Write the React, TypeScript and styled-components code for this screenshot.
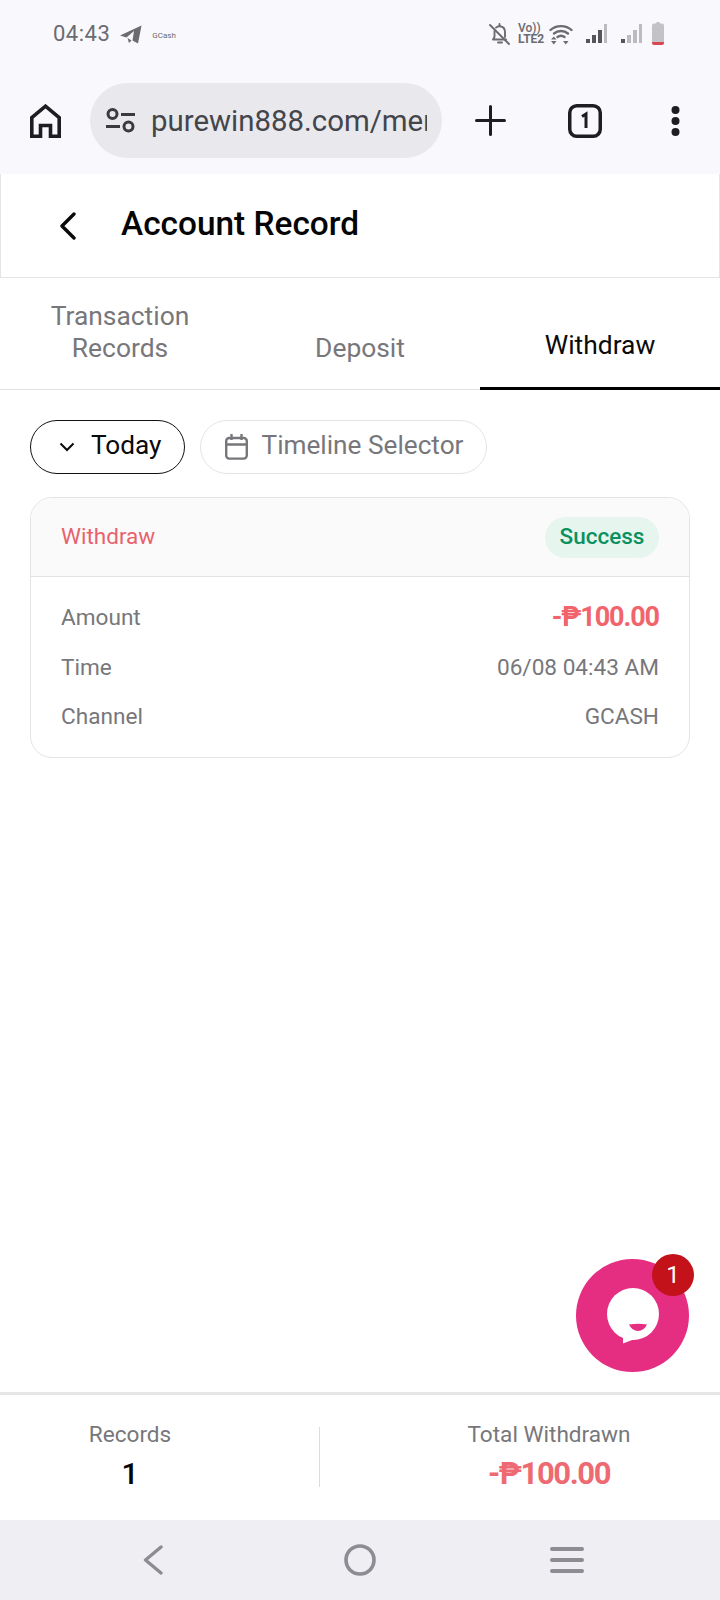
import styled, { createGlobalStyle } from "styled-components";

const Global = createGlobalStyle`
  html, body { margin: 0; padding: 0; background: #fff; }
  * { box-sizing: border-box; }
  body { font-family: Roboto, "Liberation Sans", sans-serif; }
`;

const Screen = styled.div`
  position: relative;
  width: 720px;
  height: 1600px;
  display: flex;
  flex-direction: column;
  overflow: hidden;
`;

const StatusBar = styled.div`
  height: 72px;
  flex: none;
  background: #f8f8fd;
  display: flex;
  align-items: center;
  padding: 0 56px 4px 53px;
  color: #6b6b70;
`;
const Clock = styled.span`
  font-size: 22px;
  font-weight: 400;
  letter-spacing: 0.5px;
  margin: 0 10px 2px 0;
`;
const TinyLabel = styled.span`
  font-size: 8px;
  margin-left: 10px;
  margin-top: 2px;
`;
const StatusRight = styled.div`
  margin-left: auto;
  display: flex;
  align-items: center;
`;
const Volte = styled.span`
  font-size: 12px;
  font-weight: 700;
  line-height: 11px;
  text-align: left;
  margin: 0 5px 0 8px;
  width: 26px;
`;
const VolteTop = styled.span`
  font-weight: 500;
`;
const SignalIcon = styled.svg`
  margin-left: 13px;
`;
const BatteryIcon = styled.svg`
  margin-left: 9px;
`;

const Toolbar = styled.div`
  height: 102px;
  flex: none;
  background: #f8f8fd;
  display: flex;
  align-items: flex-start;
  padding: 11px 0 0 30px;
  color: #1d1d22;
`;
const UrlPill = styled.div`
  width: 352px;
  height: 75px;
  margin-left: 29px;
  border-radius: 38px;
  background: #e8e8ed;
  display: flex;
  align-items: center;
  padding: 0 15px 0 16px;
  color: #44454a;
`;
const UrlText = styled.span`
  font-size: 29.4px;
  margin-left: 16px;
  white-space: nowrap;
  overflow: hidden;
  flex: 1;
`;
const ToolIcon = styled.div<{ $ml: number }>`
  margin-left: ${(p) => p.$ml}px;
  height: 75px;
  display: flex;
  align-items: center;
`;

const Header = styled.div`
  height: 104px;
  flex: none;
  display: flex;
  align-items: center;
  padding-left: 58px;
  border: 1px solid #e4e4e6;
  border-width: 0 1px 1px 1px;
`;
const Title = styled.h1`
  margin: 0 0 5px 44px;
  font-size: 33.4px;
  font-weight: 500;
  color: #050505;
`;

const Tabs = styled.div`
  height: 112px;
  flex: none;
  display: grid;
  grid-template-columns: repeat(3, 1fr);
  border-bottom: 1px solid #e2e2e4;
`;
const Tab = styled.div<{ $active?: boolean }>`
  display: flex;
  align-items: flex-end;
  justify-content: center;
  text-align: center;
  font-size: 26.4px;
  line-height: 32px;
  color: ${(p) => (p.$active ? "#0a0a0a" : "#77777b")};
  padding-bottom: ${(p) => (p.$active ? "26px" : "23px")};
  border-bottom: 3px solid ${(p) => (p.$active ? "#000" : "transparent")};
  margin-bottom: -1px;
`;

const Main = styled.main`
  flex: 1;
  padding: 30px 30px 0;
`;
const Filters = styled.div`
  display: flex;
  gap: 15px;
`;
const Pill = styled.div<{ $active?: boolean }>`
  height: 54px;
  border-radius: 27px;
  border: 1px solid ${(p) => (p.$active ? "#111" : "#e4e4e6")};
  display: flex;
  align-items: center;
  padding: ${(p) => (p.$active ? "0 22px 5px 28px" : "0 23px 5px 24px")};
  gap: ${(p) => (p.$active ? "16px" : "14px")};
  font-size: 26.2px;
  color: ${(p) => (p.$active ? "#0a0a0a" : "#77777b")};
`;
const PillIcon = styled.svg`
  flex: none;
  margin-top: 5px;
`;

const Card = styled.div`
  margin-top: 23px;
  border: 1px solid #e4e4e6;
  border-radius: 22px;
  overflow: hidden;
  height: 261px;
`;
const CardHead = styled.div`
  height: 79px;
  background: #fafafa;
  border-bottom: 1px solid #e2e2e4;
  display: flex;
  align-items: center;
  justify-content: space-between;
  padding: 0 30px;
`;
const CardKind = styled.span`
  font-size: 22.5px;
  color: #e8626c;
  margin-bottom: 3px;
`;
const Badge = styled.span`
  width: 114px;
  height: 41px;
  border-radius: 21px;
  background: #e6f6ef;
  color: #0b9160;
  font-size: 22.5px;
  font-weight: 500;
  display: flex;
  align-items: center;
  justify-content: center;
  padding-bottom: 3px;
`;
const CardBody = styled.div`
  padding: 16px 30px 0;
`;
const Row = styled.div`
  height: 49.5px;
  display: flex;
  align-items: center;
  justify-content: space-between;
  font-size: 22.6px;
  color: #77777b;
`;
const Amount = styled.span`
  font-size: 27px;
  font-weight: 700;
  letter-spacing: -1.1px;
  color: #f2646c;
  margin-bottom: 2px;
`;

const Footer = styled.div`
  height: 128px;
  flex: none;
  border-top: 3px solid #e6e6e8;
  display: flex;
  align-items: center;
  padding-bottom: 1px;
`;
const Stat = styled.div<{ $w?: number }>`
  width: ${(p) => (p.$w ? `${p.$w}px` : "auto")};
  flex: ${(p) => (p.$w ? "none" : 1)};
  text-align: center;
`;
const StatLabel = styled.div`
  font-size: 22.6px;
  line-height: 30px;
  color: #77777b;
`;
const StatValue = styled.div<{ $red?: boolean }>`
  font-size: ${(p) => (p.$red ? "31px" : "30px")};
  line-height: 40px;
  margin-top: 4px;
  font-weight: ${(p) => (p.$red ? 700 : 500)};
  letter-spacing: ${(p) => (p.$red ? "-1.4px" : "0")};
  color: ${(p) => (p.$red ? "#ee6a72" : "#050505")};
`;
const Divider = styled.div`
  width: 1px;
  height: 60px;
  background: #dcdcde;
  margin: 0 58px 0 59px;
`;

const NavBar = styled.div`
  height: 80px;
  flex: none;
  background: #eeeef3;
  display: grid;
  grid-template-columns: repeat(3, 1fr);
  align-items: center;
  justify-items: center;
  padding: 0 50px;
  color: #8c8c92;
`;

const Fab = styled.div`
  position: absolute;
  left: 576px;
  top: 1259px;
  width: 113px;
  height: 113px;
  border-radius: 50%;
  background: #e52d82;
  display: flex;
  align-items: center;
  justify-content: center;
`;
const FabCount = styled.span`
  position: absolute;
  top: -5px;
  right: -5px;
  width: 42px;
  height: 42px;
  border-radius: 50%;
  background: #c4121a;
  color: #fff;
  font-size: 24px;
  display: flex;
  align-items: center;
  justify-content: center;
`;

export default function App() {
  return (
    <Screen>
      <Global />
      <StatusBar>
        <Clock>04:43</Clock>
        <svg width="22" height="19" viewBox="0 0 22 19" fill="currentColor">
          <path d="M0 10.5 21.5 0.5 18 18.5 12.5 15.5 14 6 6.5 12.5Z" />
          <path d="M7.5 13 11.5 15.5 9 18Z" />
        </svg>
        <TinyLabel>GCash</TinyLabel>
        <StatusRight>
          <svg width="21" height="22" viewBox="0 0 21 22" fill="none" stroke="currentColor" strokeWidth="1.9" strokeLinecap="round">
            <path d="M1 2 20 21" />
            <path d="M4.500 16.500H17M16 14V9C16 5.500 14 3.500 11 3.200 9.500 3.100 8 3.600 7 4.600M5.500 8V14L4 16.500" />
            <path d="M9 19.500H13M10.500 1V3" />
          </svg>
          <Volte>
            <VolteTop>Vo))</VolteTop>
            <br />
            LTE2
          </Volte>
          <svg width="24" height="21" viewBox="0 0 24 21" fill="none" stroke="currentColor" strokeWidth="2.4" strokeLinecap="round">
            <path d="M1.500 6C7 .8 17 .8 22.500 6" />
            <path d="M5 9.500C9 6.200 15 6.200 19 9.500" />
            <path d="M8.500 13C10.500 11.500 13.500 11.500 15.500 13" />
            <path d="M2 15.500H7.500L4.800 12.500ZM2 17H7.500L4.800 20.500Z" fill="currentColor" stroke="none" />
            <path d="M14 17H19.500L16.800 20.500Z" fill="currentColor" stroke="none" />
          </svg>
          <SignalIcon width="22" height="20" viewBox="0 0 22 20">
            <rect x="0" y="15" width="4" height="4" fill="#55555a" />
            <rect x="6" y="11" width="4" height="8" fill="#55555a" />
            <rect x="12" y="6" width="4" height="13" fill="#55555a" />
            <rect x="18" y="0" width="3" height="19" fill="#bbbbc0" />
          </SignalIcon>
          <SignalIcon width="22" height="20" viewBox="0 0 22 20">
            <rect x="0" y="15" width="4" height="4" fill="#55555a" />
            <rect x="6" y="11" width="4" height="8" fill="#bbbbc0" />
            <rect x="12" y="6" width="4" height="13" fill="#bbbbc0" />
            <rect x="18" y="0" width="3" height="19" fill="#bbbbc0" />
          </SignalIcon>
          <BatteryIcon width="12" height="24" viewBox="0 0 12 24">
            <path d="M3.500 1.500 5 0H7L8.500 1.500H10Q12 1.500 12 3.500V20H0V3.500Q0 1.500 2 1.500Z" fill="#c3c3c7" />
            <path d="M0 20H12V21Q12 23 10 23H2Q0 23 0 21Z" fill="#d9464f" />
          </BatteryIcon>
        </StatusRight>
      </StatusBar>

      <Toolbar>
        <ToolIcon $ml={0}>
          <svg width="31" height="34" viewBox="0 0 31 34" fill="none" stroke="#1d1d22" strokeWidth="3.6">
            <path d="M1.800 32.200V13.500L15.500 2.200 29.200 13.500V32.200H20.500V21.500H10.500V32.200Z" />
          </svg>
        </ToolIcon>
        <UrlPill>
          <svg width="29" height="25" viewBox="0 0 29 25" fill="none" stroke="#3a3a3f" strokeWidth="3">
            <circle cx="6.500" cy="6" r="4.500" />
            <path d="M15 6.500H29M0 18.500H14" />
            <circle cx="22.500" cy="18.500" r="4.500" />
          </svg>
          <UrlText>purewin888.com/member</UrlText>
        </UrlPill>
        <ToolIcon $ml={33}>
          <svg width="31" height="31" viewBox="0 0 31 31" stroke="#1d1d22" strokeWidth="3" strokeLinecap="round">
            <path d="M15.500 1.500V29.500M1.500 15.500H29.500" />
          </svg>
        </ToolIcon>
        <ToolIcon $ml={62}>
          <svg width="34" height="34" viewBox="0 0 34 34">
            <rect x="1.750" y="1.750" width="30.500" height="30.500" rx="7" fill="none" stroke="#1d1d22" strokeWidth="3.500" />
            <path d="M14 12.500 18 10V24" fill="none" stroke="#1d1d22" strokeWidth="3" />
          </svg>
        </ToolIcon>
        <ToolIcon $ml={69}>
          <svg width="9" height="34" viewBox="0 0 9 34" fill="#1d1d22">
            <circle cx="4.500" cy="6" r="4" />
            <circle cx="4.500" cy="17" r="4" />
            <circle cx="4.500" cy="28" r="4" />
          </svg>
        </ToolIcon>
      </Toolbar>

      <Header>
        <svg width="18" height="28" viewBox="0 0 18 28" fill="none" stroke="#0a0a0a" strokeWidth="3.400" strokeLinecap="round" strokeLinejoin="round">
          <path d="M15 2 3 14 15 26" />
        </svg>
        <Title>Account Record</Title>
      </Header>

      <Tabs>
        <Tab>
          Transaction
          <br />
          Records
        </Tab>
        <Tab>Deposit</Tab>
        <Tab $active>Withdraw</Tab>
      </Tabs>

      <Main>
        <Filters>
          <Pill $active>
            <PillIcon width="16" height="10" viewBox="0 0 16 10" fill="none" stroke="#0a0a0a" strokeWidth="2">
              <path d="M1.500 1.500 8 8 14.500 1.500" />
            </PillIcon>
            Today
          </Pill>
          <Pill>
            <PillIcon width="23" height="26" viewBox="0 0 23 26" fill="none" stroke="#77777b" strokeWidth="2.400">
              <rect x="1.200" y="4" width="20.600" height="20.600" rx="3" />
              <path d="M1.200 10.500H21.800M6.500 0V6M16.500 0V6" />
            </PillIcon>
            Timeline Selector
          </Pill>
        </Filters>

        <Card>
          <CardHead>
            <CardKind>Withdraw</CardKind>
            <Badge>Success</Badge>
          </CardHead>
          <CardBody>
            <Row>
              <span>Amount</span>
              <Amount>-₱100.00</Amount>
            </Row>
            <Row>
              <span>Time</span>
              <span>06/08 04:43 AM</span>
            </Row>
            <Row>
              <span>Channel</span>
              <span>GCASH</span>
            </Row>
          </CardBody>
        </Card>
      </Main>

      <Footer>
        <Stat $w={260}>
          <StatLabel>Records</StatLabel>
          <StatValue>1</StatValue>
        </Stat>
        <Divider />
        <Stat>
          <StatLabel>Total Withdrawn</StatLabel>
          <StatValue $red>-₱100.00</StatValue>
        </Stat>
      </Footer>

      <NavBar>
        <svg width="20" height="30" viewBox="0 0 20 30" fill="none" stroke="currentColor" strokeWidth="3.400" strokeLinecap="round" strokeLinejoin="round">
          <path d="M18 2 2.500 15 18 28" />
        </svg>
        <svg width="32" height="32" viewBox="0 0 32 32" fill="none" stroke="currentColor" strokeWidth="3.600">
          <circle cx="16" cy="16" r="14" />
        </svg>
        <svg width="34" height="28" viewBox="0 0 34 28" fill="none" stroke="currentColor" strokeWidth="4" strokeLinecap="round">
          <path d="M2 3H32M2 14H32M2 25H32" />
        </svg>
      </NavBar>

      <Fab>
        <FabCount>1</FabCount>
        <svg width="54" height="58" viewBox="0 0 54 58">
          <circle cx="27" cy="27" r="26" fill="#fff" />
          <path d="M17 44V56.500L34 50Z" fill="#fff" />
          <path d="M23 37.500Q32 36 41 37.500 38 44 32 44 26 44 23 37.500Z" fill="#e52d82" />
        </svg>
      </Fab>
    </Screen>
  );
}
